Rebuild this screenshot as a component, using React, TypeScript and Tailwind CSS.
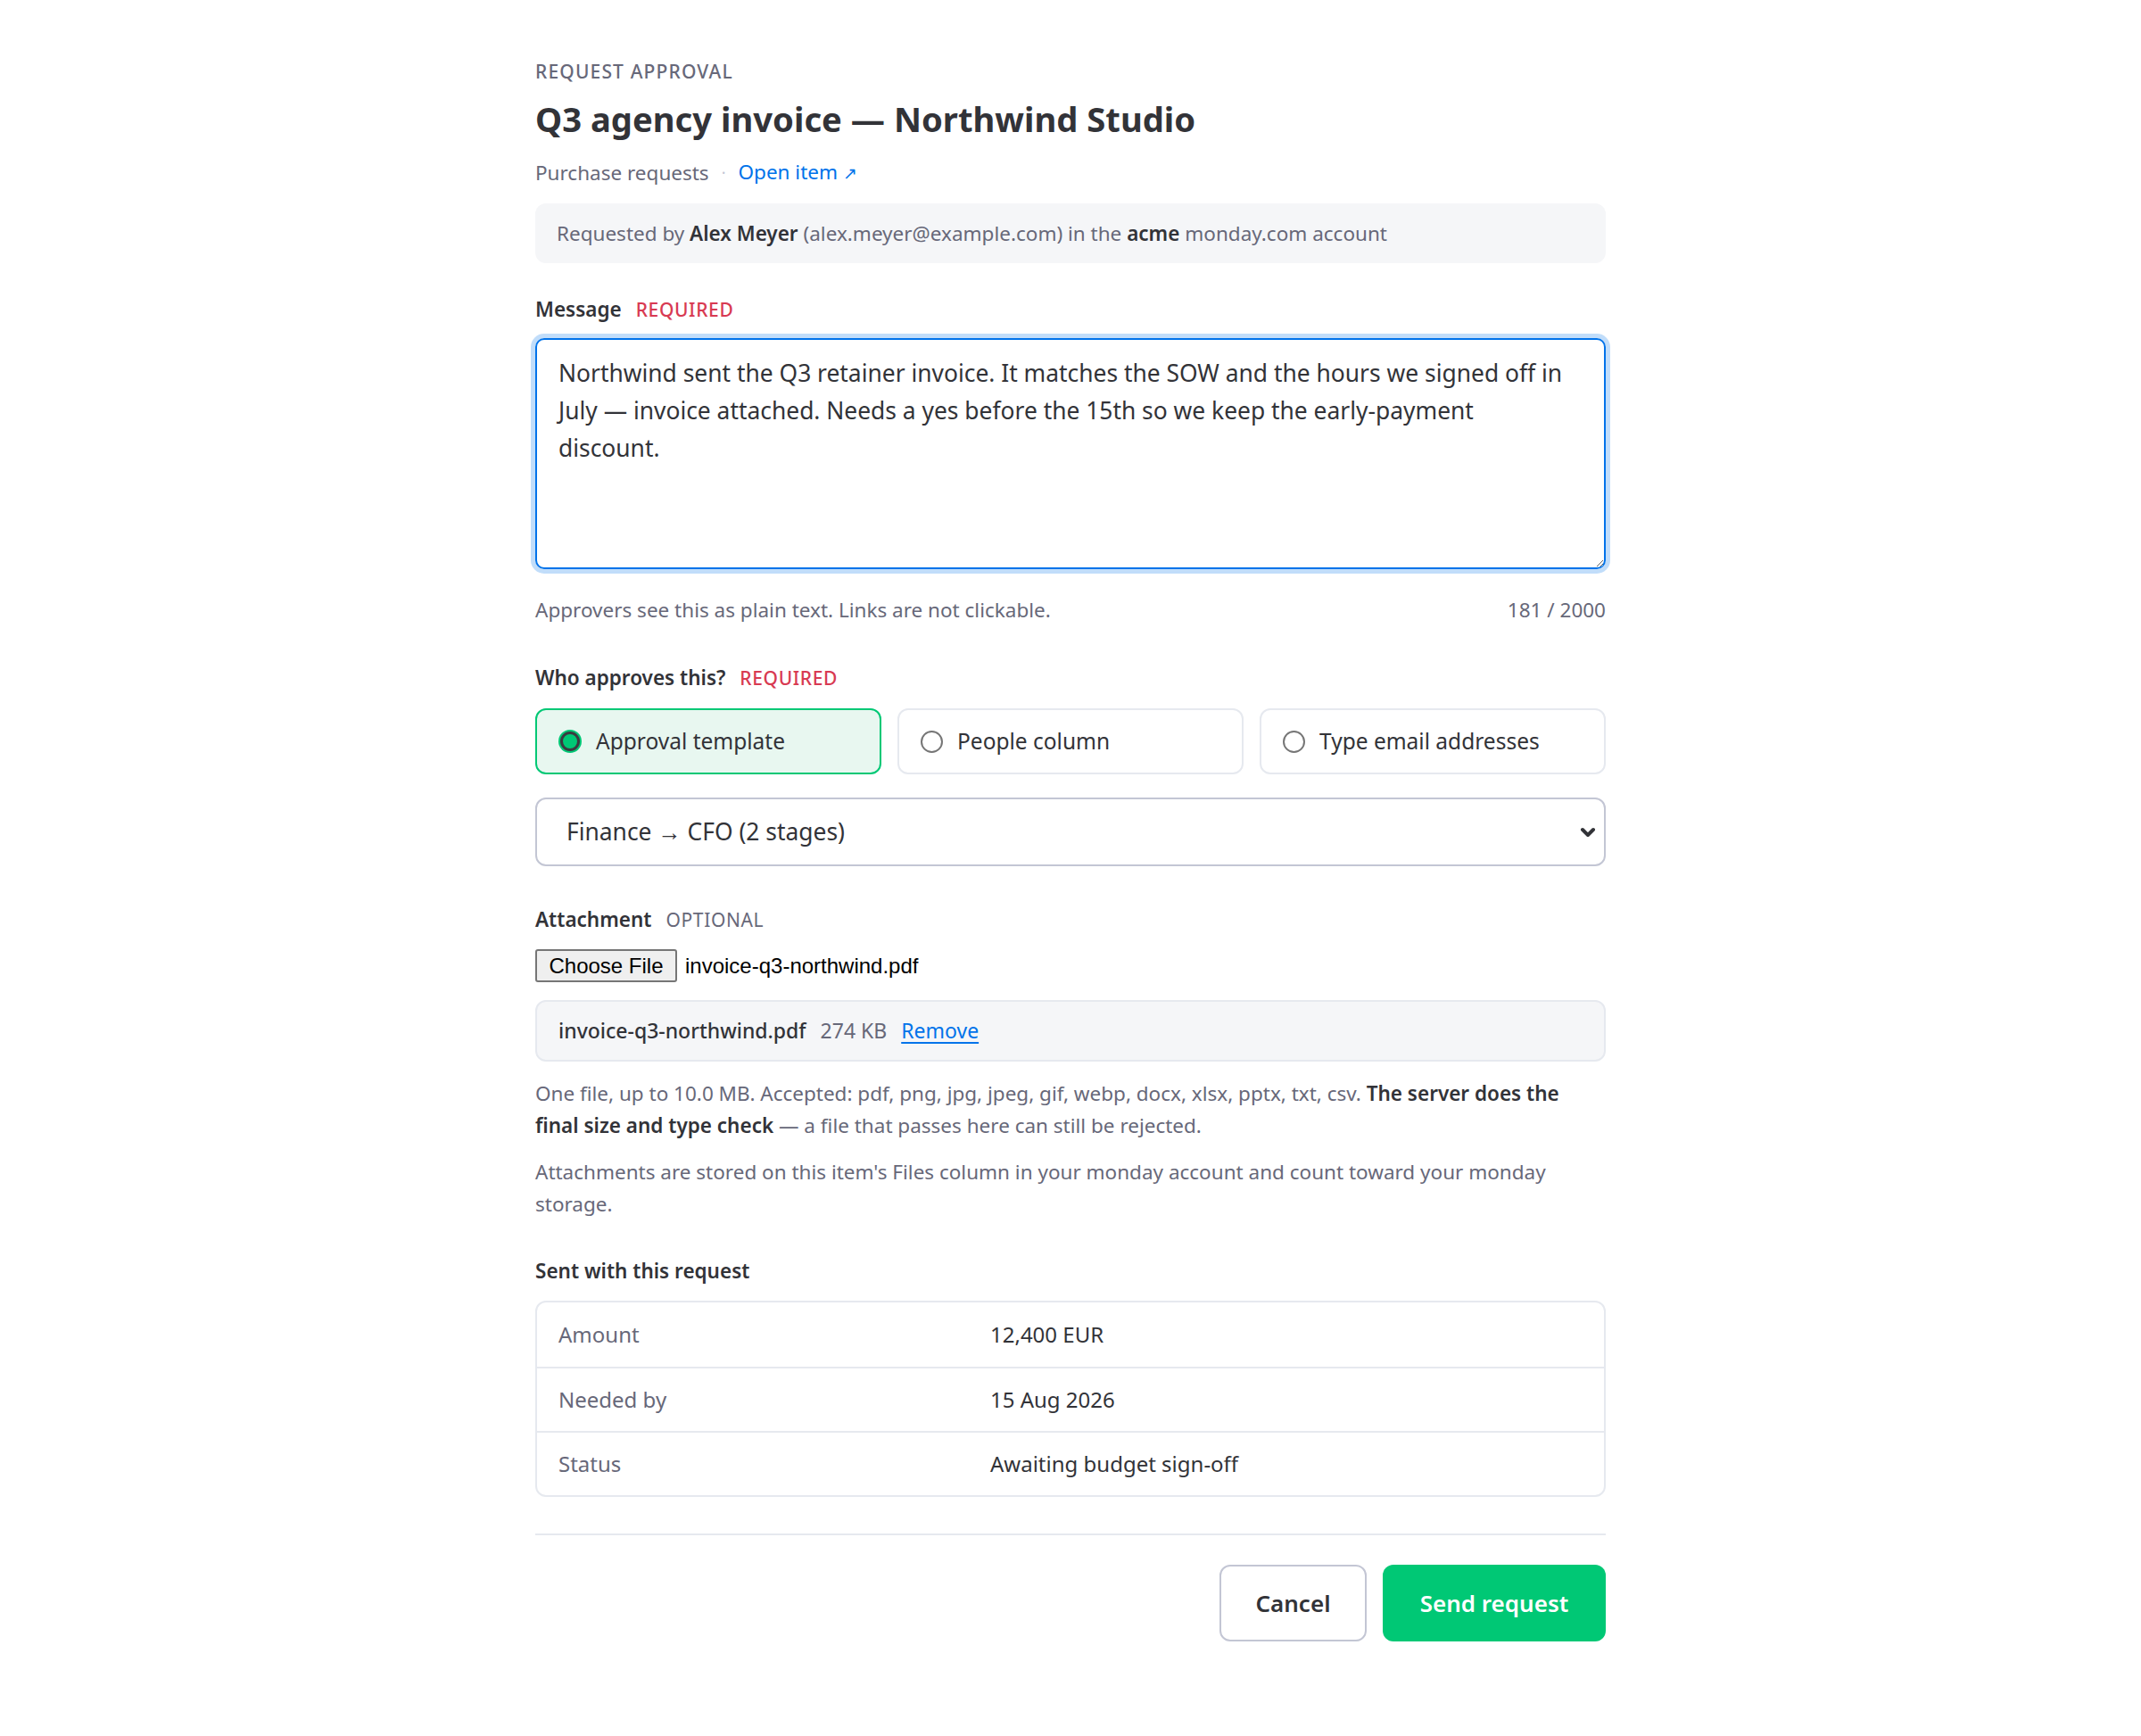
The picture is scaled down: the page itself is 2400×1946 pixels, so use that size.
import React from "react";

export default function App() {
  const msg =
    "Northwind sent the Q3 retainer invoice. It matches the SOW and the hours we signed off in July — invoice attached. Needs a yes before the 15th so we keep the early-payment discount.";
  return (
    <div className="min-h-screen w-full bg-white font-['Noto_Sans',sans-serif] text-[#323338]">
      <div className="mx-auto w-[1200px] pt-[65px] pb-[100px]">
        <div className="text-[21px] leading-[30px] font-medium uppercase tracking-[0.055em] text-[#676879]">
          Request approval
        </div>
        <h1 className="mt-[14px] text-[38.2px] leading-[48px] font-bold text-[#323338]">
          Q3 agency invoice — Northwind Studio
        </h1>
        <div className="mt-[19px] flex items-center text-[22.5px] leading-[33px] text-[#676879]">
          <span>Purchase requests</span>
          <span className="mx-[14px] text-[#c3c6d4] text-[18px]">·</span>
          <a className="text-[#0073ea]" href="#">
            Open item <span className="text-[19px]">↗</span>
          </a>
        </div>
        <div className="mt-[17px] rounded-[12px] bg-[#f5f6f8] px-[24px] py-[17px] text-[22.5px] leading-[33px] text-[#676879]">
          Requested by <span className="font-semibold text-[#323338]">Alex Meyer</span> (alex.meyer@example.com) in the{" "}
          <span className="font-semibold text-[#323338]">acme</span> monday.com account
        </div>

        <div className="mt-[37px] flex items-center gap-[16px] leading-[30px]">
          <span className="text-[22.5px] font-semibold text-[#323338]">Message</span>
          <span className="text-[21px] font-medium uppercase tracking-[0.03em] text-[#d83a52]">Required</span>
        </div>
        <textarea
          className="mt-[17px] block h-[259px] w-full resize-y rounded-[10px] border-2 border-[#0073ea] pl-[24px] pr-[36px] py-[16px] text-[26.4px] leading-[42px] text-[#323338] shadow-[0_0_0_5px_#c1ddfa] outline-none"
          defaultValue={msg}
        />
        <div className="mt-[31px] flex justify-between text-[22.5px] leading-[30px] text-[#676879]">
          <span>Approvers see this as plain text. Links are not clickable.</span>
          <span>181 / 2000</span>
        </div>

        <div className="mt-[46px] flex items-center gap-[16px] leading-[30px]">
          <span className="text-[22.5px] font-semibold text-[#323338]">Who approves this?</span>
          <span className="text-[21px] font-medium uppercase tracking-[0.03em] text-[#d83a52]">Required</span>
        </div>
        <div className="mt-[19px] grid grid-cols-3 gap-[18px]">
          <div className="flex h-[74px] items-center gap-[16px] rounded-[12px] border-2 border-[#00c875] bg-[#e8f7f0] px-[24px] text-[24.5px] text-[#323338]">
            <span className="flex h-[26px] w-[26px] items-center justify-center rounded-full bg-[#00c875]">
              <span className="h-[22px] w-[22px] rounded-full border-[3.5px] border-[#3a3b40] bg-[#00c875]" />
            </span>
            <span>Approval template</span>
          </div>
          <div className="flex h-[74px] items-center gap-[16px] rounded-[12px] border-2 border-[#e6e9ef] bg-white px-[24px] text-[24.5px] text-[#323338]">
            <span className="h-[25px] w-[25px] rounded-full border-[2px] border-[#767676] bg-white" />
            <span>People column</span>
          </div>
          <div className="flex h-[74px] items-center gap-[16px] rounded-[12px] border-2 border-[#e6e9ef] bg-white px-[24px] text-[24.5px] text-[#323338]">
            <span className="h-[25px] w-[25px] rounded-full border-[2px] border-[#767676] bg-white" />
            <span>Type email addresses</span>
          </div>
        </div>

        <div className="relative mt-[26px]">
          <select
            className="block h-[77px] w-full appearance-none rounded-[12px] border-2 border-[#c3c6d4] bg-white px-[33px] text-[26.4px] text-[#323338] outline-none"
            defaultValue="fin"
          >
            <option value="fin">Finance → CFO (2 stages)</option>
          </select>
          <svg
            className="pointer-events-none absolute right-[10px] top-1/2 -translate-y-1/2"
            width="20"
            height="14"
            viewBox="0 0 20 14"
          >
            <path d="M4 4 L10 10 L16 4" fill="none" stroke="#323338" strokeWidth="4" strokeLinecap="round" strokeLinejoin="round" />
          </svg>
        </div>

        <div className="mt-[45px] flex items-center gap-[16px] leading-[30px]">
          <span className="text-[22.5px] font-semibold text-[#323338]">Attachment</span>
          <span className="text-[21px] uppercase tracking-[0.03em] text-[#676879]">Optional</span>
        </div>
        <div className="mt-[18px] flex items-center gap-[9px] font-['Liberation_Sans',Arial,sans-serif] text-[24px] text-black">
          <span className="flex h-[37px] w-[159px] items-center justify-center rounded-[3px] border-2 border-[#767676] bg-[#efefef] leading-none">
            Choose File
          </span>
          <span>invoice-q3-northwind.pdf</span>
        </div>
        <div className="mt-[20px] flex h-[69px] items-center gap-[16px] rounded-[12px] border-2 border-[#e6e9ef] bg-[#f5f6f8] px-[24px] text-[23px]">
          <span className="font-medium text-[#323338]">invoice-q3-northwind.pdf</span>
          <span className="text-[#676879]">274 KB</span>
          <a href="#" className="text-[#0073ea] underline underline-offset-[4px]">
            Remove
          </a>
        </div>
        <p className="mt-[18px] text-[22.5px] leading-[36px] text-[#676879]">
          One file, up to 10.0 MB. Accepted: pdf, png, jpg, jpeg, gif, webp, docx, xlsx, pptx, txt, csv.{" "}
          <span className="font-semibold text-[#323338]">The server does the final size and type check</span> — a file that passes here can still be rejected.
        </p>
        <p className="mt-[16px] text-[22.5px] leading-[36px] text-[#676879]">
          Attachments are stored on this item's Files column in your monday account and count toward your monday storage.
        </p>

        <div className="mt-[42px] text-[22.5px] leading-[30px] font-semibold text-[#323338]">Sent with this request</div>
        <div className="mt-[18px] overflow-hidden rounded-[12px] border-2 border-[#e6e9ef] text-[24px]">
          {[
            ["Amount", "12,400 EUR"],
            ["Needed by", "15 Aug 2026"],
            ["Status", "Awaiting budget sign-off"],
          ].map(([k, v], i) => (
            <div
              key={k}
              className={`grid h-[72px] grid-cols-[484px_1fr] items-center px-[24px] ${i > 0 ? "border-t-2 border-[#e6e9ef]" : ""}`}
            >
              <span className="text-[#676879]">{k}</span>
              <span className="text-[#323338]">{v}</span>
            </div>
          ))}
        </div>

        <div className="mt-[41px] h-[2px] bg-[#e6e9ef]" />
        <div className="mt-[33px] flex justify-end gap-[18px]">
          <button className="h-[86px] w-[165px] rounded-[12px] border-2 border-[#c3c6d4] bg-white text-[26px] font-semibold text-[#323338]">
            Cancel
          </button>
          <button className="h-[86px] w-[250px] rounded-[12px] bg-[#00c875] text-[26px] font-semibold text-white">
            Send request
          </button>
        </div>
      </div>
    </div>
  );
}
